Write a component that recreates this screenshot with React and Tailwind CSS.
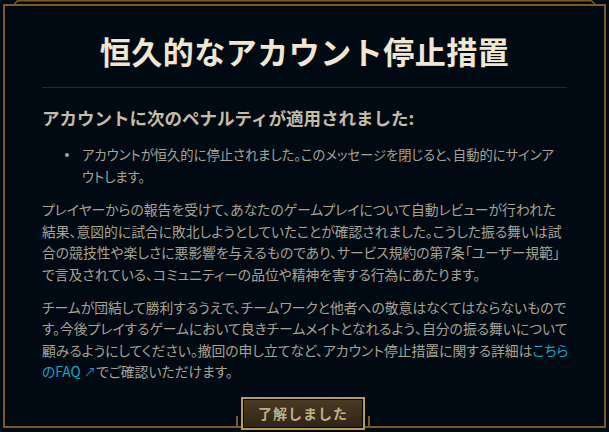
const JP = "'Noto Sans CJK JP', 'Noto Sans', sans-serif";

const bodyLines1 = [
    'プレイヤーからの報告を受けて、あなたのゲームプレイについて自動レビューが行われた',
    '結果、意図的に試合に敗北しようとしていたことが確認されました。こうした振る舞いは試',
    '合の競技性や楽しさに悪影響を与えるものであり、サービス規約の第7条「ユーザー規範」',
    'で言及されている、コミュニティーの品位や精神を害する行為にあたります。',
];

const App = () => {
    return (
        <div
            className="relative w-[609px] h-[432px] bg-[#010a13] overflow-hidden"
            style={{ fontFamily: JP }}
        >
            {/* top trim above the frame */}
            <svg className="absolute left-0 top-0" width="609" height="8">
                <polyline
                    points="13.5,5 17.5,0.75 591.5,0.75 595.5,5"
                    fill="none"
                    stroke="#785a28"
                    strokeWidth="1.5"
                />
            </svg>

            <div className="mx-[3px] mt-[4px] h-[424px] border-2 border-[#785a28] bg-[#010a13] px-[37px] pt-[27px]">
                <h1 className="text-center text-[31px] leading-[36px] font-bold text-[#f0e6d2] tracking-[0.5px]">
                    恒久的なアカウント停止措置
                </h1>
                <div className="mt-[18px] h-px bg-[#262a30]" />

                <h2 className="mt-[18px] text-[17.5px] leading-[24px] font-bold text-[#c4bca8]">
                    アカウントに次のペナルティが適用されました:
                </h2>

                <ul className="mt-[14px] pl-[40px] text-[13.3px] leading-[21.5px] text-[#a8a294] whitespace-nowrap [font-feature-settings:'palt']">
                    <li className="relative">
                        <span className="absolute -left-[17px] top-[9px] h-[4px] w-[4px] rounded-full bg-[#a8a294]" />
                        アカウントが恒久的に停止されました。このメッセージを閉じると、自動的にサインア
                        <br />
                        ウトします。
                    </li>
                </ul>

                <p className="mt-[12px] text-[13.8px] leading-[21.5px] text-[#a8a294] whitespace-nowrap [font-feature-settings:'palt']">
                    {bodyLines1.map((l, i) => (
                        <span key={i}>
                            {l}
                            {i < bodyLines1.length - 1 && <br />}
                        </span>
                    ))}
                </p>

                <p className="mt-[12px] text-[13.8px] leading-[21.3px] text-[#a8a294] whitespace-nowrap [font-feature-settings:'palt']">
                    チームが団結して勝利するうえで、チームワークと他者への敬意はなくてはならないもので
                    <br />
                    す。今後プレイするゲームにおいて良きチームメイトとなれるよう、自分の振る舞いについて
                    <br />
                    顧みるようにしてください。撤回の申し立てなど、アカウント停止措置に関する詳細は
                    <span className="text-[#1aa3c4]">こちら</span>
                    <br />
                    <span className="text-[#1aa3c4]">
                        のFAQ <span className="text-[12px]">↗</span>
                    </span>
                    でご確認いただけます。
                </p>
            </div>

            {/* button sitting on the bottom edge of the frame */}
            <div className="absolute left-[236px] top-[396px] flex h-[34px] items-end">
                <div className="h-[10px] w-[2px] bg-[#785a28] mb-[4px]" />
                <div className="mx-[3px] bg-[#010a13]">
                    <button className="flex h-[33px] w-[124px] items-center justify-center border-2 border-[#b89a5e] bg-gradient-to-b from-[#4b3b26] to-[#2f2415] shadow-[inset_0_0_0_1px_#010a13] text-[14px] font-bold tracking-[1px] text-[#c0b088]">
                        了解しました
                    </button>
                </div>
                <div className="h-[10px] w-[2px] bg-[#785a28] mb-[4px]" />
            </div>
        </div>
    );
};

export default App;
